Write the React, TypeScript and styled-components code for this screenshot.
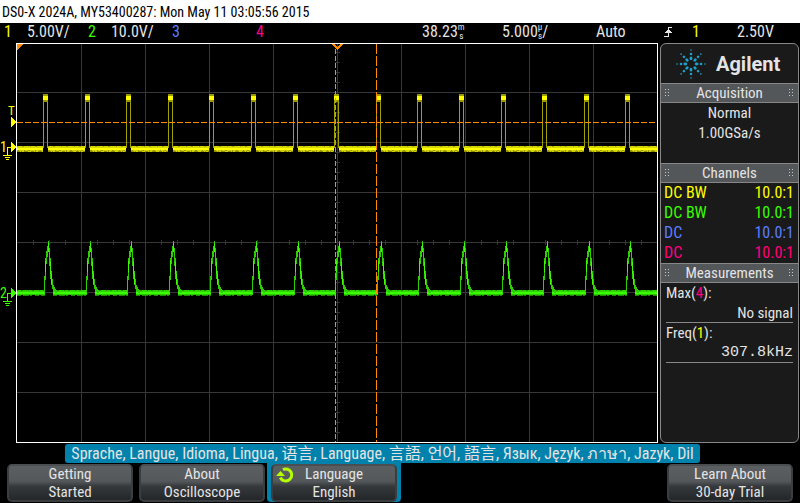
import React from "react";
import styled, { createGlobalStyle } from "styled-components";

const YELLOW = "#ffff00";
const GREEN = "#39ff00";
const BLUE = "#5a7dff";
const PINK = "#ff0080";
const ORANGE = "#ff8c00";
const TEAL = "#0082ad";
const INK = "#e4e4e4";

const Global = createGlobalStyle`
  * { box-sizing: border-box; }
  body {
    margin: 0;
    background: #000;
    color: ${INK};
    font-family: "Roboto Condensed", Roboto, "Noto Sans CJK SC", sans-serif;
    font-size: 15px;
    font-weight: 400;
  }
`;

const Page = styled.div`
  min-height: 100vh;
  display: flex;
  flex-direction: column;
  background: #000;
`;

const TitleBar = styled.header`
  height: 23px;
  padding: 0 2px;
  background: #fff;
  color: #000;
  font-size: 14px;
  line-height: 24px;
  white-space: nowrap;
`;

const StatusBar = styled.div`
  height: 20px;
  padding-left: 4px;
  display: grid;
  grid-template-columns: 84fr 84fr 84fr 166fr 80fr 94fr 68fr 136fr;
  font-size: 16px;
  line-height: 18px;
  white-space: nowrap;
`;

const StatusCell = styled.div<{ $gap?: number }>`
  display: flex;
  gap: ${(p) => p.$gap ?? 15}px;
`;

const TriggerCell = styled.div`
  display: grid;
  grid-template-columns: 28px 45px 1fr;
`;

const Tint = styled.span<{ $color: string }>`
  color: ${(p) => p.$color};
`;

const StackedUnit = styled.span`
  display: inline-flex;
  flex-direction: column;
  font-size: 9px;
  line-height: 9px;
  text-align: center;
`;

const Main = styled.main`
  display: flex;
  flex: 1;
  min-height: 400px;
  padding-right: 1px;
`;

const Gutter = styled.svg`
  width: 16px;
  height: 400px;
  flex: none;
`;

const Plot = styled.div`
  flex: 1;
  min-width: 0;
  margin-right: 2px;
  border: 1px solid #fff;
`;

const Screen = styled.svg`
  display: block;
  width: 100%;
  height: 100%;
`;

const SidePanel = styled.aside`
  width: 139px;
  flex: none;
  border: 1px solid #878787;
  border-radius: 6px;
  background: #1a1a1a;
  overflow: hidden;
`;

const Brand = styled.div`
  height: 39px;
  padding-left: 15px;
  display: flex;
  align-items: center;
  gap: 10px;
  font-family: Roboto, sans-serif;
  font-size: 20px;
  font-weight: 700;
`;

const SectionTitle = styled.h2`
  height: 20px;
  margin: 0;
  padding: 0 4px;
  display: flex;
  align-items: center;
  justify-content: space-between;
  border: solid #878787;
  border-width: 1px 0;
  background: #54575a;
  font-size: 15px;
  font-weight: 400;
  line-height: 18px;
`;

const SectionBody = styled.div<{ $lines: number }>`
  min-height: ${(p) => p.$lines * 20}px;
  line-height: 20px;
  text-align: center;
`;

const ChannelRow = styled.div<{ $color: string }>`
  height: 20px;
  padding: 0 4px 0 3px;
  display: flex;
  justify-content: space-between;
  color: ${(p) => p.$color};
  font-size: 16px;
  line-height: 20px;
`;

const Measurement = styled.div`
  height: 40px;
  margin: 0 5px;
  border-bottom: 1px solid #878787;
  line-height: 20px;
`;

const Reading = styled.div<{ $mono?: boolean }>`
  height: 19px;
  text-align: right;
  font-family: ${(p) => (p.$mono ? '"Liberation Mono", monospace' : "inherit")};
`;

const Footer = styled.footer`
  height: 60px;
  flex: none;
`;

const Banner = styled.div`
  height: 19px;
  margin: 1px 100px 1px 65px;
  border-radius: 3px;
  background: ${TEAL};
  font-size: 16px;
  line-height: 19px;
  text-align: center;
  white-space: nowrap;
`;

const SoftKeys = styled.nav`
  padding: 0 7px;
  display: grid;
  grid-template-columns: repeat(6, 1fr);
  gap: 6px;
`;

const KeySlot = styled.div<{ $active?: boolean }>`
  margin: -1px -4px 0;
  padding: 1px 4px 0;
  border-radius: 0 0 4px 4px;
  background: ${(p) => (p.$active ? TEAL : "transparent")};
`;

const Key = styled.button`
  position: relative;
  width: 100%;
  height: 38px;
  padding: 0;
  border: 2px solid #3b3e40;
  border-top-color: #4b4e50;
  border-radius: 5px;
  background: linear-gradient(#5c5f61 0%, #55585a 45%, #36393b 60%, #242729 100%);
  color: ${INK};
  font: inherit;
`;

const KeyLine = styled.span`
  display: block;
  height: 18px;
  line-height: 16px;
`;

const KeyIcon = styled.svg`
  position: absolute;
  left: 3px;
  top: 0;
`;

const PERIOD = 41.6;
const pulses = Array.from({ length: 15 }, (_, i) => i * PERIOD);

function GridLines() {
  const xs = [64, 128, 192, 256, 320, 384, 448, 512, 576];
  const ys = [48, 98, 148, 198, 248, 298, 348];
  const tickX = Array.from({ length: 39 }, (_, i) => (i + 1) * 16);
  const tickY = Array.from({ length: 39 }, (_, i) => i * 10 + 8);
  return (
    <g fill="#373737">
      {xs.map((x) => <rect key={x} x={x} y="0" width="1" height="398" />)}
      {ys.map((y) => <rect key={y} x="0" y={y} width="640" height="1" />)}
      {tickX.map((x) => <rect key={x} x={x} y="196" width="1" height="5" />)}
      {tickY.map((y) => <rect key={y} x="318" y={y} width="5" height="1" />)}
    </g>
  );
}

function YellowTrace() {
  return (
    <g>
      {[-PERIOD, ...pulses].map((p) => {
        const from = Math.max(0, Math.round(p + 31));
        const to = Math.min(640, Math.round(p + PERIOD + 26));
        const w = to - from;
        return (
          <g key={p}>
            <rect x={from} y="102" width={w} height="2" fill="#d6d600" />
            <rect x={from} y="104" width={w} height="2" fill={YELLOW} />
            <rect x={from} y="106" width={w} height="2" fill="#d0d000" />
            <path d={`M${from} 107.5H${to}`} stroke="#8f8f00" strokeDasharray="3 1 1 2 4 3" />
            <path d={`M${from} 106.5H${to}`} stroke="#a0a000" strokeDasharray="2 5 1 3" />
            <path d={`M${from} 102.5H${to}`} stroke="#a8a800" strokeDasharray="1 4 2 6" />
          </g>
        );
      })}
      {pulses.map((p) => {
        const x = Math.round(p + 26);
        return (
          <g key={p}>
            <path d={`M${x + 0.5} 104V54M${x + 4.5} 104V54`} stroke="#a0a000" />
            <rect x={x} y="50" width="5" height="8" fill="#9a9a00" />
            <rect x={x} y="52" width="5" height="4" fill={YELLOW} />
          </g>
        );
      })}
    </g>
  );
}

function GreenTrace() {
  return (
    <g>
      {[-PERIOD, ...pulses].map((p) => {
        const from = Math.max(0, Math.round(p + 36));
        const to = Math.min(640, Math.round(p + PERIOD + 28));
        const w = to - from;
        return (
          <g key={p}>
            <rect x={from} y="246" width={w} height="2" fill="#2fd400" />
            <rect x={from} y="248" width={w} height="2" fill={GREEN} />
            <rect x={from} y="250" width={w} height="1" fill="#2bc400" />
            <path d={`M${from} 251.5H${to}`} stroke="#1d8c00" strokeDasharray="4 2 6 1 2 3" />
            <path d={`M${from} 246.5H${to}`} stroke="#1f9800" strokeDasharray="1 3 2 5" />
          </g>
        );
      })}
      {pulses.map((p) => {
        const x = Math.round(p + 31);
        return (
          <g key={p} fill="none">
            <path
              d={`M${x - 3.5} 249V232M${x - 2.5} 236V214M${x - 1.5} 220V207M${x - 0.5} 213V202M${x + 0.5} 208V197M${x + 1.5} 222V204M${x + 2.5} 235V214M${x + 3.5} 241V227M${x + 4.5} 245V235M${x + 5.5} 247V241M${x + 6.5} 248V243M${x + 7.5} 249V245M${x + 8.5} 249V246`}
              stroke="#2bd000"
            />
            <path
              d={`M${x + 0.5} 199V208M${x - 2.5} 217V228M${x + 2.5} 218V230M${x + 3.5} 230V240`}
              stroke={GREEN}
            />
          </g>
        );
      })}
    </g>
  );
}

function Waveforms() {
  return (
    <Screen viewBox="0 0 640 398" preserveAspectRatio="none" shapeRendering="crispEdges">
      <GridLines />
      <YellowTrace />
      <GreenTrace />
      <g stroke={ORANGE} fill="none">
        <path d="M0 78.5H640" strokeDasharray="6 2" />
        <path d="M318.5 5V398" strokeDasharray="5 2" />
        <path d="M359.5 0V398" strokeDasharray="10 2" />
      </g>
      <path d="M315 0H318L320.5 3L323 0H326L320.5 6Z" fill={ORANGE} />
      <path d="M0 0H6L0 6Z" fill={ORANGE} />
    </Screen>
  );
}

function GroundMarker({ y, color, label }: { y: number; color: string; label: string }) {
  return (
    <g>
      <text x="0" y={y + 5} fill={color} fontSize="14">{label}</text>
      <g shapeRendering="crispEdges">
        <path d={`M11 ${y - 5}L16 ${y}L11 ${y + 5}Z`} fill={color} />
        <path
          d={`M11 ${y + 0.5}H7.5V${y + 8}M3 ${y + 8.5}H12M5 ${y + 10.5}H10M6 ${y + 12.5}H9`}
          stroke={color}
          fill="none"
        />
      </g>
    </g>
  );
}

function Markers() {
  return (
    <Gutter viewBox="0 0 16 400">
      <text x="8" y="72" fill={YELLOW} fontSize="13">T</text>
      <path d="M11 74L16 79L11 84Z" fill={YELLOW} shapeRendering="crispEdges" />
      <GroundMarker y={104} color={YELLOW} label="1" />
      <GroundMarker y={250} color={GREEN} label="2" />
    </Gutter>
  );
}

function Spark() {
  return (
    <svg width="30" height="30" viewBox="-15 -15 30 30" fill="#1fa0c8">
      {[0, 45, 90, 135, 180, 225, 270, 315].map((a) => (
        <g key={a} transform={`rotate(${a})`}>
          <ellipse cx="5.7" cy="0" rx="1.9" ry="1.4" />
          <circle cx="10" cy="0" r="1.3" />
          <circle cx="14" cy="0" r="0.8" />
        </g>
      ))}
    </svg>
  );
}

function Grip() {
  return (
    <svg width="5" height="8" fill="#c8c8c8" shapeRendering="crispEdges">
      {[0, 3, 6].map((y) => (
        <g key={y}>
          <rect x="0" y={y} width="1" height="1" />
          <rect x="3" y={y} width="1" height="1" />
        </g>
      ))}
    </svg>
  );
}

function Section({ title }: { title: string }) {
  return (
    <SectionTitle>
      <Grip />
      {title}
      <Grip />
    </SectionTitle>
  );
}

const channels = [
  { color: YELLOW, coupling: "DC BW" },
  { color: GREEN, coupling: "DC BW" },
  { color: BLUE, coupling: "DC" },
  { color: PINK, coupling: "DC" },
];

function SoftKey({ lines, active }: { lines: [string, string]; active?: boolean }) {
  return (
    <KeySlot $active={active}>
      <Key type="button">
        {active && (
          <KeyIcon width="18" height="18" viewBox="0 0 18 18">
            <path d="M7 3.6A6 6 0 1 1 4.3 11.5" fill="none" stroke="#b4ff00" strokeWidth="3" />
            <path d="M0 10L4.5 5L9 10Z" fill="#b4ff00" />
          </KeyIcon>
        )}
        <KeyLine>{lines[0]}</KeyLine>
        <KeyLine>{lines[1]}</KeyLine>
      </Key>
    </KeySlot>
  );
}

export default function App() {
  return (
    <Page>
      <Global />
      <TitleBar>DS0-X 2024A, MY53400287: Mon May 11 03:05:56 2015</TitleBar>
      <StatusBar>
        <StatusCell><Tint $color={YELLOW}>1</Tint>5.00V/</StatusCell>
        <StatusCell><Tint $color={GREEN}>2</Tint>10.0V/</StatusCell>
        <StatusCell><Tint $color={BLUE}>3</Tint></StatusCell>
        <StatusCell><Tint $color={PINK}>4</Tint></StatusCell>
        <StatusCell $gap={0}>38.23<StackedUnit><span>m</span><span>s</span></StackedUnit></StatusCell>
        <StatusCell $gap={0}>5.000<StackedUnit><span>µ</span><span>s</span></StackedUnit>/</StatusCell>
        <StatusCell>Auto</StatusCell>
        <TriggerCell>
          <svg width="9" height="18" viewBox="0 0 9 18" shapeRendering="crispEdges">
            <path d="M0 13.5H4.5V4.5H8" stroke={INK} fill="none" />
            <path d="M1 10L4.5 6L8 10Z" fill={INK} />
          </svg>
          <Tint $color={YELLOW}>1</Tint>
          <span>2.50V</span>
        </TriggerCell>
      </StatusBar>
      <Main>
        <Markers />
        <Plot><Waveforms /></Plot>
        <SidePanel>
          <Brand><Spark />Agilent</Brand>
          <Section title="Acquisition" />
          <SectionBody $lines={3}>
            <div>Normal</div>
            <div>1.00GSa/s</div>
          </SectionBody>
          <Section title="Channels" />
          {channels.map((c) => (
            <ChannelRow key={c.color} $color={c.color}>
              <span>{c.coupling}</span>
              <span>10.0:1</span>
            </ChannelRow>
          ))}
          <Section title="Measurements" />
          <Measurement>
            Max(<Tint $color={PINK}>4</Tint>):
            <Reading>No signal</Reading>
          </Measurement>
          <Measurement>
            Freq(<Tint $color={YELLOW}>1</Tint>):
            <Reading $mono>307.8kHz</Reading>
          </Measurement>
        </SidePanel>
      </Main>
      <Footer>
        <Banner>Sprache, Langue, Idioma, Lingua, 语言, Language, 言語, 언어, 語言, Язык, Język, ภาษา, Jazyk, Dil</Banner>
        <SoftKeys>
          <SoftKey lines={["Getting", "Started"]} />
          <SoftKey lines={["About", "Oscilloscope"]} />
          <SoftKey lines={["Language", "English"]} active />
          <span />
          <span />
          <SoftKey lines={["Learn About", "30-day Trial"]} />
        </SoftKeys>
      </Footer>
    </Page>
  );
}
